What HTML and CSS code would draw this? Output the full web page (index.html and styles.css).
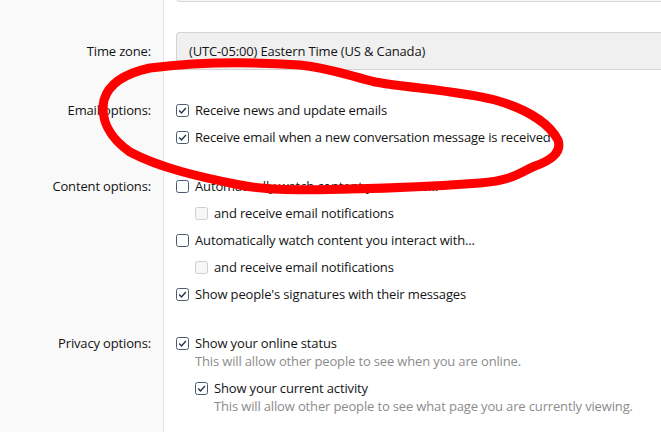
FILE: index.html
```html
<!DOCTYPE html>
<html lang="en">
<head>
    <meta charset="UTF-8">
    <meta name="viewport" content="width=device-width, initial-scale=1.0">
    <title>Preferences</title>
    <link rel="stylesheet" href="styles.css">
</head>
<body>
    <div class="form">
        <div class="row row-first">
            <div class="label"></div>
            <div class="field"><div class="input"></div></div>
        </div>

        <div class="row row-tz">
            <div class="label">Time zone:</div>
            <div class="field"><div class="select">(UTC-05:00) Eastern Time (US &amp; Canada)</div></div>
        </div>

        <div class="row">
            <div class="label">Email options:</div>
            <div class="field">
                <div class="check"><svg class="box" viewBox="0 0 13 13"><rect x="0.5" y="0.5" width="12" height="12" rx="2"/><path d="M3.2 6.6l2.3 2.3 4.4-4.9"/></svg>Receive news and update emails</div>
                <div class="check"><svg class="box" viewBox="0 0 13 13"><rect x="0.5" y="0.5" width="12" height="12" rx="2"/><path d="M3.2 6.6l2.3 2.3 4.4-4.9"/></svg>Receive email when a new conversation message is received</div>
            </div>
        </div>

        <div class="row">
            <div class="label">Content options:</div>
            <div class="field">
                <div class="check"><svg class="box" viewBox="0 0 13 13"><rect x="0.5" y="0.5" width="12" height="12" rx="2"/></svg>Automatically watch content you create...</div>
                <div class="check sub"><svg class="box off" viewBox="0 0 13 13"><rect x="0.5" y="0.5" width="12" height="12" rx="2"/></svg>and receive email notifications</div>
                <div class="check"><svg class="box" viewBox="0 0 13 13"><rect x="0.5" y="0.5" width="12" height="12" rx="2"/></svg>Automatically watch content you interact with...</div>
                <div class="check sub"><svg class="box off" viewBox="0 0 13 13"><rect x="0.5" y="0.5" width="12" height="12" rx="2"/></svg>and receive email notifications</div>
                <div class="check"><svg class="box" viewBox="0 0 13 13"><rect x="0.5" y="0.5" width="12" height="12" rx="2"/><path d="M3.2 6.6l2.3 2.3 4.4-4.9"/></svg>Show people's signatures with their messages</div>
            </div>
        </div>

        <div class="row">
            <div class="label">Privacy options:</div>
            <div class="field">
                <div class="check"><svg class="box" viewBox="0 0 13 13"><rect x="0.5" y="0.5" width="12" height="12" rx="2"/><path d="M3.2 6.6l2.3 2.3 4.4-4.9"/></svg>Show your online status</div>
                <div class="hint">This will allow other people to see when you are online.</div>
                <div class="check sub"><svg class="box" viewBox="0 0 13 13"><rect x="0.5" y="0.5" width="12" height="12" rx="2"/><path d="M3.2 6.6l2.3 2.3 4.4-4.9"/></svg>Show your current activity</div>
                <div class="hint sub">This will allow other people to see what page you are currently viewing.</div>
            </div>
        </div>
    </div>

    <svg class="scribble" viewBox="0 0 661 432">
        <path d="M150 68 C190 63 240 61 300 65 C330 68 350 76 375 82 C410 88 460 91 495 100 C530 110 550 125 558 140 C562 152 552 160 535 166 C520 172 515 180 480 183 C440 186 400 188 350 189 C300 190 270 191 240 185 C200 177 160 168 130 152 C110 138 100 120 104 100 C108 86 122 74 150 68"/>
    </svg>
</body>
</html>
```

FILE: styles.css
```css
html {
    background: linear-gradient(to right, #f9f9f9 0, #f9f9f9 163px, #e6e6e6 163px, #e6e6e6 164px, #fff 164px);
}
body {
    margin: 0;
    font-family: "Open Sans", "Noto Sans", sans-serif;
    font-size: 13px;
    letter-spacing: -0.15px;
    color: #141414;
    overflow: hidden;
    height: 432px;
}
.form {
    padding-top: 1px;
    margin-top: -37px;
}
.row {
    display: grid;
    grid-template-columns: 164px 1fr;
    padding-top: 31px;
}
.row-first {
    padding-top: 0;
}
.row-tz {
    padding-top: 30px;
}
.label {
    text-align: right;
    padding-right: 13px;
    line-height: 18px;
}
.row-tz .label {
    line-height: 38px;
}
.field {
    padding-left: 12px;
    display: flex;
    flex-direction: column;
}
.input, .select {
    height: 36px;
    border: 1px solid #d8d8d8;
    border-right: 0;
    border-radius: 4px 0 0 4px;
    background: #f5f5f5;
}
.select {
    background: #f0f0f0;
    border-color: #d3d3d3;
    line-height: 36px;
    padding-left: 12px;
}
.check {
    display: flex;
    align-items: center;
    line-height: 18px;
    margin-bottom: 9px;
}
.check:last-child {
    margin-bottom: 0;
}
.sub {
    margin-left: 19px;
}
.box {
    width: 13px;
    height: 13px;
    margin-right: 6px;
    flex-shrink: 0;
}
.box rect {
    fill: #fff;
    stroke: #4b5a70;
}
.box path {
    fill: none;
    stroke: #24344b;
    stroke-width: 1.4;
}
.box.off rect {
    fill: #f7f7f7;
    stroke: #cfcfcf;
}
.hint {
    color: #8c8c8c;
    line-height: 16px;
    margin-top: -8px;
    margin-bottom: 10px;
    padding-left: 19px;
}
.hint.sub {
    margin-left: 19px;
    margin-bottom: 0;
}
.scribble {
    position: absolute;
    left: 0;
    top: 0;
    width: 661px;
    height: 432px;
}
.scribble path {
    fill: none;
    stroke: #ff0000;
    stroke-width: 9;
    stroke-linejoin: round;
    stroke-linecap: round;
}
```
